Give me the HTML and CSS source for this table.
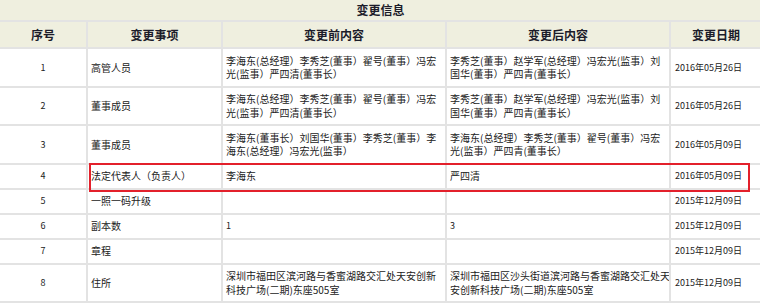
FILE: index.html
```html
<!DOCTYPE html>
<html lang="zh-CN">
<head>
<meta charset="utf-8">
<link rel="stylesheet" href="styles.css">
</head>
<body>
<div class="wrap">
<table class="info">
  <colgroup>
    <col class="c-no"><col class="c-item"><col class="c-before"><col class="c-after"><col class="c-date">
  </colgroup>
  <thead>
    <tr class="title-row"><th colspan="5">变更信息</th></tr>
    <tr class="head-row">
      <th>序号</th><th>变更事项</th><th>变更前内容</th><th>变更后内容</th><th>变更日期</th>
    </tr>
  </thead>
  <tbody>
    <tr>
      <td class="no">1</td><td>高管人员</td>
      <td>李海东(总经理）李秀芝(董事）翟号(董事）冯宏<br>光(监事）严四清(董事长）</td>
      <td>李秀芝(董事）赵学军(总经理）冯宏光(监事）刘<br>国华(董事）严四青(董事长）</td>
      <td class="date">2016年05月26日</td>
    </tr>
    <tr>
      <td class="no">2</td><td>董事成员</td>
      <td>李海东(总经理）李秀芝(董事）翟号(董事）冯宏<br>光(监事）严四清(董事长）</td>
      <td>李秀芝(董事）赵学军(总经理）冯宏光(监事）刘<br>国华(董事）严四青(董事长）</td>
      <td class="date">2016年05月26日</td>
    </tr>
    <tr>
      <td class="no">3</td><td>董事成员</td>
      <td>李海东(董事长）刘国华(董事）李秀芝(董事）李<br>海东(总经理）冯宏光(监事）</td>
      <td>李海东(总经理）李秀芝(董事）翟号(董事）冯宏<br>光(监事）严四青(董事长）</td>
      <td class="date">2016年05月09日</td>
    </tr>
    <tr>
      <td class="no">4</td><td>法定代表人（负责人）</td>
      <td>李海东</td>
      <td>严四清</td>
      <td class="date">2016年05月09日</td>
    </tr>
    <tr>
      <td class="no">5</td><td>一照一码升级</td>
      <td></td>
      <td></td>
      <td class="date">2015年12月09日</td>
    </tr>
    <tr>
      <td class="no">6</td><td>副本数</td>
      <td class="num">1</td>
      <td class="num">3</td>
      <td class="date">2015年12月09日</td>
    </tr>
    <tr>
      <td class="no">7</td><td>章程</td>
      <td></td>
      <td></td>
      <td class="date">2015年12月09日</td>
    </tr>
    <tr>
      <td class="no">8</td><td>住所</td>
      <td>深圳市福田区滨河路与香蜜湖路交汇处天安创新<br>科技广场(二期)东座505室</td>
      <td>深圳市福田区沙头街道滨河路与香蜜湖路交汇处天<br>安创新科技广场(二期)东座505室</td>
      <td class="date">2015年12月09日</td>
    </tr>
  </tbody>
</table>
<div class="highlight"></div>
</div>
</body>
</html>
```

FILE: styles.css
```css
html, body {
  margin: 0;
  padding: 0;
  background: #ffffff;
  overflow: hidden;
}
.wrap {
  position: relative;
  width: 760px;
  height: 303px;
  overflow: hidden;
}
.info {
  width: 762px;
  table-layout: fixed;
  border-collapse: collapse;
  font-family: "Noto Sans CJK SC", "Liberation Sans", sans-serif;
  font-size: 10px;
  color: #222222;
}
.c-no { width: 87px; }
.c-item { width: 135px; }
.c-before { width: 224px; }
.c-after { width: 224px; }
.c-date { width: 92px; }

.info th, .info td {
  border: 2px solid #e3e3e3;
  white-space: nowrap;
  overflow: hidden;
}
.info tr > :first-child { border-left: none; }
.title-row th {
  border-top: none;
  background: #efefdf;
  height: 20px;
  padding: 0;
  font-size: 12px;
  line-height: 16px;
  font-weight: bold;
  color: #1c1c2a;
  text-align: center;
}
.head-row th {
  background: #efefdf;
  height: 25px;
  padding: 0;
  font-size: 12px;
  line-height: 16px;
  font-weight: bold;
  color: #1c1c2a;
  text-align: center;
}
.info td {
  padding: 4.75px 3px;
  line-height: 13.5px;
  text-align: left;
  vertical-align: middle;
}
.info td.no {
  text-align: center;
  font-size: 9px;
}
.info td.num { font-size: 9px; }
.info td.date {
  font-size: 9px;
  padding-left: 4px;
}
.highlight {
  position: absolute;
  left: 89px;
  top: 163px;
  width: 657px;
  height: 25px;
  border: 2px solid #e3202b;
}
```
